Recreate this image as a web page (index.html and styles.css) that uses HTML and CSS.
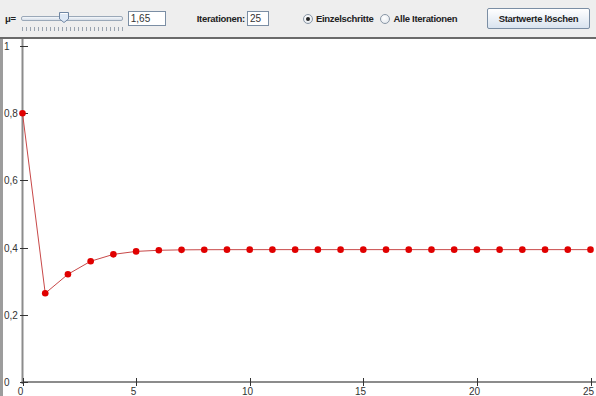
FILE: index.html
```html
<!DOCTYPE html>
<html lang="de">
<head>
  <meta charset="UTF-8">
  <title>Logistische Iteration</title>
  <link rel="stylesheet" href="styles.css">
</head>
<body>
  <div id="toolbar">
    <span class="label mu">&mu;=</span>
    <div class="slider">
      <div class="track"></div>
      <svg class="thumb" width="12" height="13" viewBox="0 0 12 13">
        <path d="M1.5 1.5 H10.5 V8 L6 11.5 L1.5 8 Z" fill="#dde8f5" stroke="#6f86a3" stroke-width="1"/>
        <path d="M2.5 2.5 H9.5" stroke="#ffffff" stroke-width="1"/>
      </svg>
      <div class="ticks" id="ticks"></div>
    </div>
    <input class="field mu-field" type="text" value="1,65">
    <span class="label iter">Iterationen:</span>
    <input class="field iter-field" type="text" value="25">
    <label class="radio first"><span class="dot checked"></span>Einzelschritte</label>
    <label class="radio"><span class="dot"></span>Alle Iterationen</label>
    <button class="clear">Startwerte löschen</button>
  </div>
  <div id="chart">
    <svg id="plot" width="593" height="357" viewBox="3 39 593 357"></svg>
  </div>
  <script>
    const svg = document.getElementById('plot');
    const NS = 'http://www.w3.org/2000/svg';
    const mu = 1.65;
    const steps = 25;
    const x0 = 22.5, unitX = 22.72; // pixels per iteration
    const y0 = 382, unitY = 336;    // pixels per 1.0

    function add(tag, attrs, text) {
      const el = document.createElementNS(NS, tag);
      for (const k in attrs) el.setAttribute(k, attrs[k]);
      if (text !== undefined) el.textContent = text;
      svg.appendChild(el);
      return el;
    }

    // axes
    add('line', { x1: x0, y1: 39, x2: x0, y2: 384, class: 'axis' });
    add('line', { x1: x0 - 1, y1: y0, x2: 596, y2: y0, class: 'axis' });

    // y ticks
    for (let i = 0; i <= 5; i++) {
      const v = i / 5;
      const y = Math.round(y0 - v * unitY) + 0.5;
      add('line', { x1: 20, y1: y, x2: 28, y2: y, class: 'tick' });
      const label = i === 5 ? '1' : (i === 0 ? '0' : '0,' + (i * 2));
      add('text', { x: 4, y: y + 3.5, class: 'lbl' }, label);
    }

    // x ticks
    for (let n = 0; n <= steps; n += 5) {
      const x = Math.round(x0 + n * unitX) + 0.5;
      add('line', { x1: x, y1: 378, x2: x, y2: 386, class: 'tick' });
      add('text', { x: x - 3, y: 395, class: 'lbl', 'text-anchor': 'middle' }, String(n));
    }

    // iterate the logistic map
    const pts = [];
    let v = 0.8;
    for (let n = 0; n <= steps; n++) {
      pts.push([x0 + n * unitX, y0 - v * unitY]);
      v = mu * v * (1 - v);
    }
    add('polyline', { points: pts.map(p => p.join(',')).join(' '), class: 'path' });
    pts.forEach(p => add('circle', { cx: p[0], cy: p[1], r: 3.3, class: 'pt' }));

    // slider ticks
    const ticks = document.getElementById('ticks');
    for (let i = 0; i < 26; i++) {
      const t = document.createElement('span');
      ticks.appendChild(t);
    }
  </script>
</body>
</html>
```

FILE: styles.css
```css
body {
  margin: 0;
  padding: 0;
  width: 596px;
  height: 396px;
  overflow: hidden;
  background-color: #ffffff;
  font-family: "Liberation Sans", Arial, sans-serif;
}
#toolbar {
  display: flex;
  align-items: center;
  height: 37px;
  background-color: #eeeeee;
  border-bottom: 2px solid #6a6a6a;
  font-size: 9.5px;
  letter-spacing: -0.3px;
  color: #222;
}
.label {
  font-weight: bold;
}
.mu {
  margin-left: 5px;
}
.slider {
  position: relative;
  width: 102px;
  height: 30px;
  margin-left: 5px;
}
.track {
  position: absolute;
  left: 0;
  right: 0;
  top: 12px;
  height: 3px;
  border: 1px solid #9aa8b8;
  border-radius: 2px;
  background: linear-gradient(#f4f7fb, #d6dee8);
}
.thumb {
  position: absolute;
  left: 37px;
  top: 7px;
}
.ticks {
  position: absolute;
  left: 1px;
  right: 0;
  top: 23px;
  display: flex;
  justify-content: space-between;
}
.ticks span {
  width: 1px;
  height: 4px;
  background-color: #9aa4b0;
}
.field {
  box-sizing: border-box;
  height: 15px;
  padding: 0 2px;
  border: 1px solid #7b8ea4;
  background-color: #fff;
  font-family: "Liberation Sans", Arial, sans-serif;
  font-size: 10px;
  color: #333;
  outline: none;
}
.mu-field {
  width: 38px;
  margin-left: 5px;
}
.iter {
  margin-left: 31px;
}
.iter-field {
  width: 22px;
  margin-left: 2px;
}
.radio {
  display: flex;
  align-items: center;
  font-weight: bold;
}
.radio.first {
  margin-left: 34px;
}
.radio + .radio {
  margin-left: 7px;
}
.dot {
  box-sizing: border-box;
  width: 10px;
  height: 10px;
  margin-right: 3px;
  border: 1px solid #8a97a6;
  border-radius: 50%;
  background: radial-gradient(circle at 40% 35%, #ffffff, #dfe4ea);
  position: relative;
}
.dot.checked::after {
  content: "";
  position: absolute;
  left: 2px;
  top: 2px;
  width: 4px;
  height: 4px;
  border-radius: 50%;
  background-color: #222;
}
.clear {
  margin-left: auto;
  margin-right: 6px;
  height: 21px;
  width: 103px;
  padding: 0;
  border: 1px solid #7b8ea4;
  border-radius: 2px;
  background: linear-gradient(#ffffff, #d9e3ef);
  font-family: "Liberation Sans", Arial, sans-serif;
  font-size: 9.5px;
  letter-spacing: -0.3px;
  font-weight: bold;
  color: #222;
}
#chart {
  border-left: 3px solid #9c9c9c;
  height: 357px;
}
#plot {
  display: block;
}
.axis {
  stroke: #8c8c8c;
  stroke-width: 2;
}
.tick {
  stroke: #333;
  stroke-width: 1;
}
.lbl {
  font-family: "Liberation Sans", Arial, sans-serif;
  font-size: 10px;
  fill: #333;
}
.path {
  fill: none;
  stroke: #c84848;
  stroke-width: 1;
}
.pt {
  fill: #e00000;
}
```
